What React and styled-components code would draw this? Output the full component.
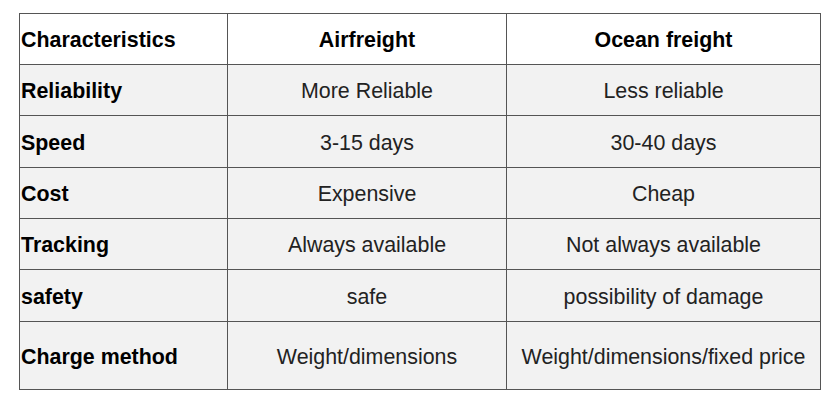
import React from 'react'
import styled, { createGlobalStyle } from 'styled-components'

const GlobalStyle = createGlobalStyle`
  body {
    margin: 0;
    background: #fff;
    font-family: "Liberation Sans", Arial, sans-serif;
  }
`

const Grid = styled.div`
  display: grid;
  grid-template-columns: 207px 278px 313px;
  grid-template-rows: 50px 50px 51px 50px 50px 51px 67px;
  gap: 1px;
  padding: 1px;
  width: max-content;
  margin: 13px 0 0 19px;
  background: #555;
`

const Cell = styled.div`
  display: flex;
  align-items: center;
  justify-content: ${p => (p.$label ? 'flex-start' : 'center')};
  padding: 3px 0 0 ${p => (p.$label ? '1px' : '0')};
  background: ${p => (p.$head ? '#fff' : '#f2f2f2')};
  color: ${p => (p.$head || p.$label ? '#000' : '#222')};
  font-size: 21.4px;
  font-weight: ${p => (p.$head || p.$label ? 700 : 400)};
  white-space: nowrap;
`

const rows = [
  ['Reliability', 'More Reliable', 'Less reliable'],
  ['Speed', '3-15 days', '30-40 days'],
  ['Cost', 'Expensive', 'Cheap'],
  ['Tracking', 'Always available', 'Not always available'],
  ['safety', 'safe', 'possibility of damage'],
  ['Charge method', 'Weight/dimensions', 'Weight/dimensions/fixed price'],
]

export default function App() {
  return (
    <>
      <GlobalStyle />
      <Grid>
        <Cell $head $label>Characteristics</Cell>
        <Cell $head>Airfreight</Cell>
        <Cell $head>Ocean freight</Cell>
        {rows.map(r => (
          <React.Fragment key={r[0]}>
            <Cell $label>{r[0]}</Cell>
            <Cell>{r[1]}</Cell>
            <Cell>{r[2]}</Cell>
          </React.Fragment>
        ))}
      </Grid>
    </>
  )
}
